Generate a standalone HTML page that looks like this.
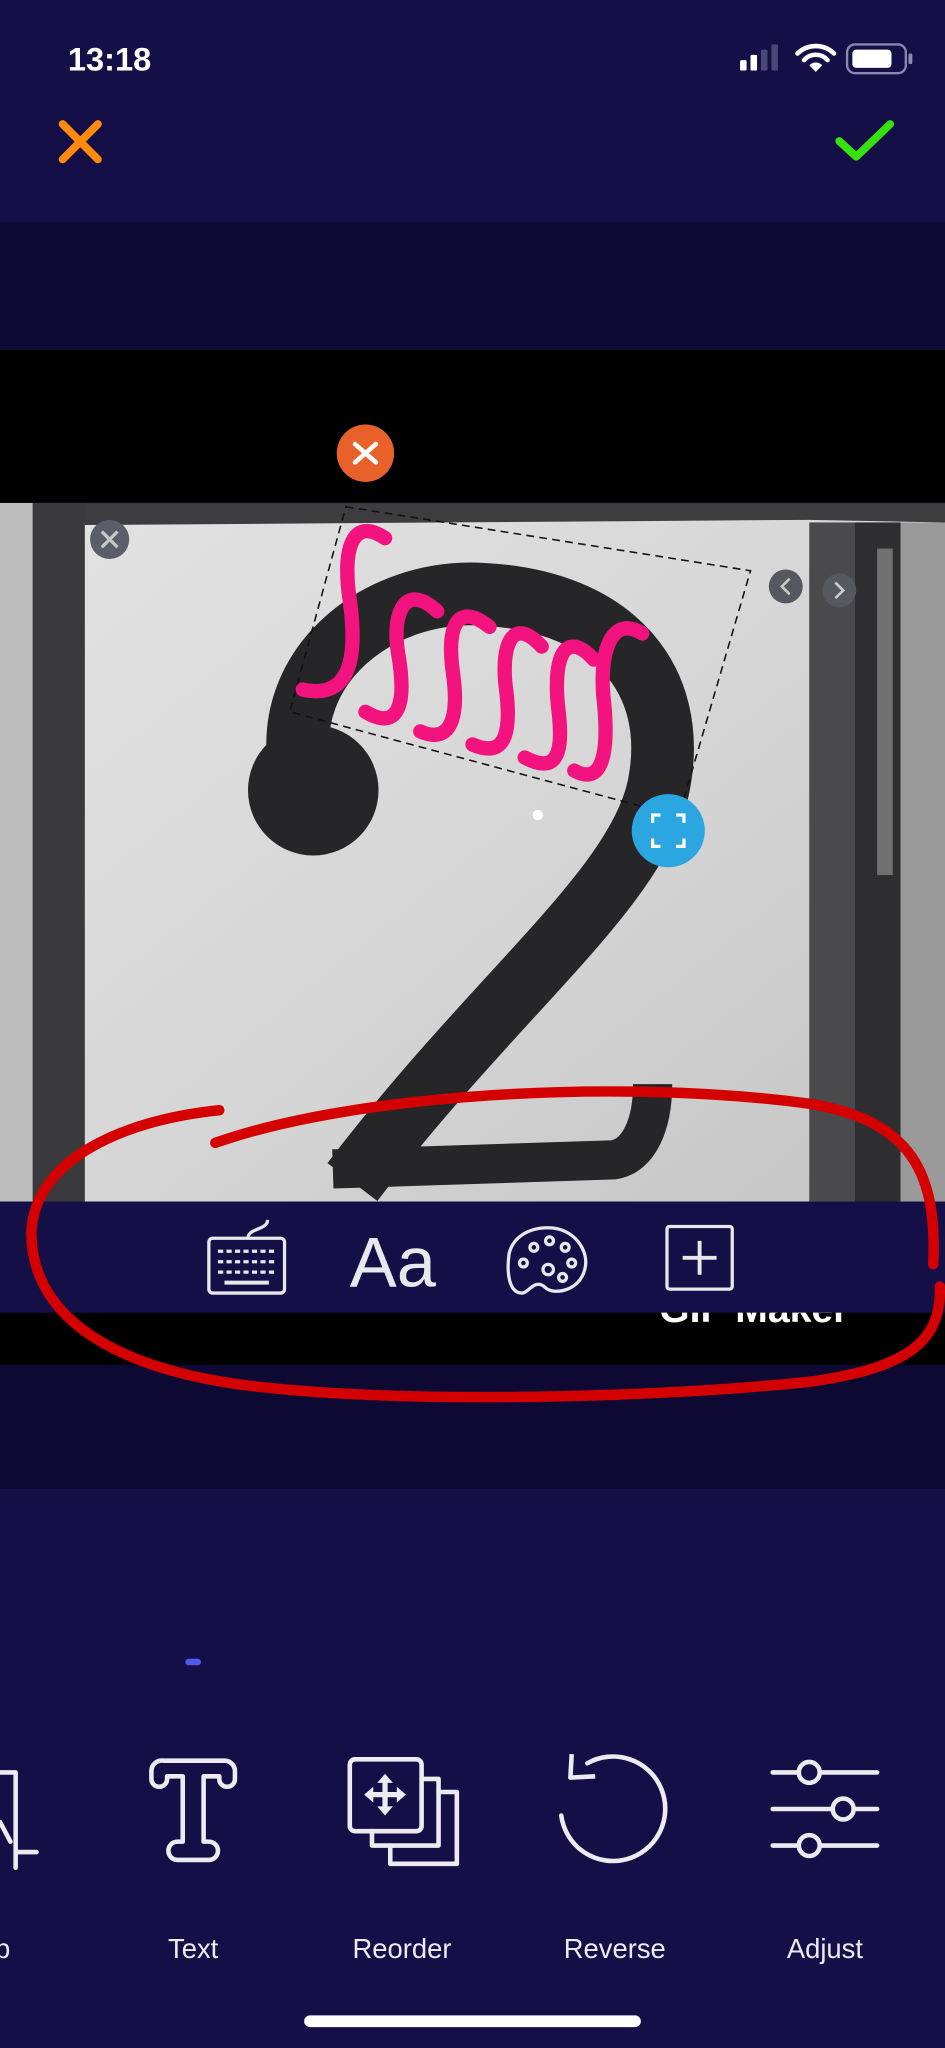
<!DOCTYPE html>
<html><head><meta charset="utf-8"><style>
html,body{margin:0;padding:0;background:#150f47;}
body{width:945px;height:2048px;overflow:hidden;position:relative;font-family:"Liberation Sans",sans-serif;}
svg{position:absolute;left:0;top:0;}
</style></head><body>
<svg width="945" height="2048" viewBox="0 0 724 1568" preserveAspectRatio="none">
<defs>
<linearGradient id="ph" x1="0" y1="0" x2="1" y2="1">
<stop offset="0" stop-color="#e2e2e2"/><stop offset="0.5" stop-color="#d6d6d6"/><stop offset="1" stop-color="#c4c4c4"/>
</linearGradient>
<clipPath id="pc"><rect x="0" y="385" width="724" height="535"/></clipPath>
</defs>
<rect x="0" y="0" width="724" height="170" fill="#150f47"/>
<rect x="0" y="170" width="724" height="98" fill="#0e0933"/>
<rect x="0" y="268" width="724" height="117" fill="#000"/>
<g clip-path="url(#pc)">
<rect x="0" y="385" width="724" height="535" fill="#bdbdbd"/>
<rect x="25" y="385" width="45" height="535" fill="#3a3a3c"/>
<polygon points="65,400 400,385 724,398 724,920 65,920" fill="url(#ph)"/>
<polygon points="65,385 724,385 724,400 620,398 65,402" fill="#3d3d40"/>
<rect x="620" y="400" width="70" height="520" fill="#4a4a4d"/>
<rect x="655" y="400" width="35" height="520" fill="#2e2e30"/>
<rect x="690" y="400" width="34" height="520" fill="#9a9a9a"/>
<rect x="672" y="420" width="12" height="250" fill="#707070"/>
<path d="M230,590 C215,510 290,450 370,455 C470,460 520,520 505,600 C490,680 380,760 270,905" fill="none" stroke="#262628" stroke-width="48"/>
<circle cx="240" cy="605" r="50" fill="#262628"/>
<path d="M255,895 L470,888 C490,885 500,860 500,830" fill="none" stroke="#262628" stroke-width="30"/>
<circle cx="84" cy="413" r="15" fill="#5a5e6a"/>
<path d="M78,407 L90,419 M90,407 L78,419" stroke="#c8c8c8" stroke-width="2.5"/>
<circle cx="602" cy="449" r="13" fill="#55585f"/>
<circle cx="643" cy="452" r="13" fill="#55585f"/>
<path d="M605,443 L599,449 L605,455 M640,446 L646,452 L640,458" fill="none" stroke="#ccc" stroke-width="2"/>
</g>
<polygon points="265,388 575,437 520,625 222,545" fill="none" stroke="#111" stroke-width="1.2" stroke-dasharray="6,4"/>
<g fill="none" stroke="#f2137e" stroke-width="11" stroke-linecap="round">
<path d="M295,412 C270,395 262,420 268,460 C275,510 265,535 232,528"/>
<path d="M335,468 C310,445 300,470 305,500 C312,540 305,560 280,545"/>
<path d="M375,480 C350,460 342,480 347,515 C352,550 345,570 322,560"/>
<path d="M415,495 C392,470 383,495 388,530 C392,565 385,580 362,570"/>
<path d="M455,505 C432,480 423,505 428,545 C432,580 425,592 402,580"/>
<path d="M492,485 C468,470 458,500 463,540 C467,585 458,600 440,590"/>
</g>
<circle cx="412" cy="624" r="4" fill="#fff"/>
<circle cx="280" cy="347" r="22" fill="#e8612a"/>
<path d="M272,340 L288,354 M288,340 L272,354" stroke="#fff" stroke-width="3.5" stroke-linecap="round"/>
<circle cx="512" cy="636" r="28" fill="#2ba6e0"/>
<path d="M500,630 V624 H506 M518,624 H524 V630 M524,642 V648 H518 M506,648 H500 V642" fill="none" stroke="#fff" stroke-width="2.5"/>
<rect x="0" y="1005" width="724" height="40" fill="#000"/>
<text x="505" y="1012" font-size="30" font-weight="bold" fill="#fff" font-family="Liberation Sans,sans-serif">GIF Maker</text>
<rect x="0" y="920" width="724" height="85" fill="#150f47"/>
<rect x="0" y="1045" width="724" height="95" fill="#0e0933"/>
<g fill="none" stroke="#e8e8ec" stroke-width="2.5">
<rect x="160" y="948" width="58" height="42" rx="3"/>
<path d="M190,948 C190,940 205,942 205,934"/>
<path d="M167,958 H211 M167,966 H211 M167,974 H211" stroke-dasharray="4,2.5"/>
<path d="M172,982 H206" stroke-width="3"/>
<path d="M420,940 C440,940 452,958 448,972 C444,988 425,992 418,986 C410,978 405,990 400,990 C390,990 388,975 390,960 C393,947 405,940 420,940 Z"/>
<circle cx="409" cy="955" r="3"/><circle cx="421" cy="950" r="3"/><circle cx="433" cy="955" r="3"/>
<circle cx="401" cy="967" r="3"/><circle cx="438" cy="967" r="3"/><circle cx="420" cy="972" r="4"/><circle cx="431" cy="978" r="3"/>
<rect x="511" y="939" width="50" height="48" rx="2"/>
<path d="M536,950 V976 M523,963 H549" stroke-width="3"/>
</g>
<text x="268" y="985" font-size="54" fill="#e8e8ec" font-family="Liberation Sans,sans-serif">Aa</text>
<g fill="none" stroke="#d40000" stroke-width="8" stroke-linecap="round">
<path d="M165,875 C270,838 470,825 620,845 C700,858 718,900 715,968"/>
<path d="M168,850 C90,858 25,890 24,945 C25,1010 90,1050 200,1062 C320,1075 500,1070 620,1058 C690,1048 722,1030 720,985"/>
</g>
<rect x="142" y="1270" width="12" height="5" rx="2.5" fill="#5058f0"/>
<g fill="none" stroke="#ececf0" stroke-width="3.5" stroke-linecap="round" stroke-linejoin="round">
<path d="M0,1357 H12 V1418 H28 M12,1418 V1430"/>
<path d="M0,1395 L8,1410"/>
<path d="M125,1348 H172 A8,8 0 0 1 180,1356 V1362 A6,6 0 0 1 168,1362 V1360 H156 V1410 H160 A7,7 0 0 1 160,1424 H136 A7,7 0 0 1 136,1410 H140 V1360 H128 V1362 A6,6 0 0 1 116,1362 V1356 A8,8 0 0 1 125,1348 Z"/>
<rect x="268" y="1347" width="55" height="55" rx="4"/>
<path d="M323,1362 H336 V1413 H285 V1402"/>
<path d="M336,1372 H350 V1427 H299 V1413"/>
<path d="M430,1390 A40,40 0 1 0 450,1350"/>
<path d="M438,1343 L437,1361 L456,1360" stroke-linecap="butt"/>
<path d="M592,1357 H672 M592,1385 H672 M592,1413 H672"/>
</g>
<g fill="#ececf0">
<path d="M295,1358 l6,7 h-4 v7 h7 v-4 l7,6 -7,6 v-4 h-7 v7 h4 l-6,7 -6,-7 h4 v-7 h-7 v4 l-7,-6 7,-6 v4 h7 v-7 h-4 z"/>
</g>
<g fill="#150f47" stroke="#ececf0" stroke-width="3.5">
<circle cx="620" cy="1357" r="8"/><circle cx="646" cy="1385" r="8"/><circle cx="620" cy="1413" r="8"/>
</g>
<g font-size="21" fill="#ececf0" text-anchor="middle" font-family="Liberation Sans,sans-serif">
<text x="2" y="1499">p</text>
<text x="148" y="1499">Text</text>
<text x="308" y="1499">Reorder</text>
<text x="471" y="1499">Reverse</text>
<text x="632" y="1499">Adjust</text>
</g>
<rect x="233" y="1543" width="258" height="9" rx="4.5" fill="#fff"/>
<text x="52" y="54" font-size="25" font-weight="bold" fill="#fff" font-family="Liberation Sans,sans-serif">13:18</text>
<rect x="567" y="46" width="5" height="8" rx="1" fill="#fff"/>
<rect x="575" y="42" width="5" height="12" rx="1" fill="#fff"/>
<rect x="583" y="38" width="5" height="16" rx="1" fill="#4b4875"/>
<rect x="591" y="34" width="5" height="20" rx="1" fill="#4b4875"/>
<path d="M611,41 A20,20 0 0 1 639,41 M616,46 A12,12 0 0 1 634,46" fill="none" stroke="#fff" stroke-width="3.5" stroke-linecap="round"/>
<path d="M620,50 L625,55 L630,50 A7,7 0 0 0 620,50 Z" fill="#fff"/>
<rect x="649" y="34" width="45" height="22" rx="6" fill="none" stroke="#8a87b0" stroke-width="1.8"/>
<rect x="653" y="38" width="30" height="14" rx="3" fill="#fff"/>
<rect x="696" y="41" width="3" height="8" rx="1" fill="#8a87b0"/>
<path d="M48,95 L75,122 M75,95 L48,122" stroke="#ff8a0d" stroke-width="6" stroke-linecap="round"/>
<path d="M643,108 L656,120 L682,95" fill="none" stroke="#35e20f" stroke-width="6" stroke-linecap="round" stroke-linejoin="round"/>
</svg>
</body></html>
